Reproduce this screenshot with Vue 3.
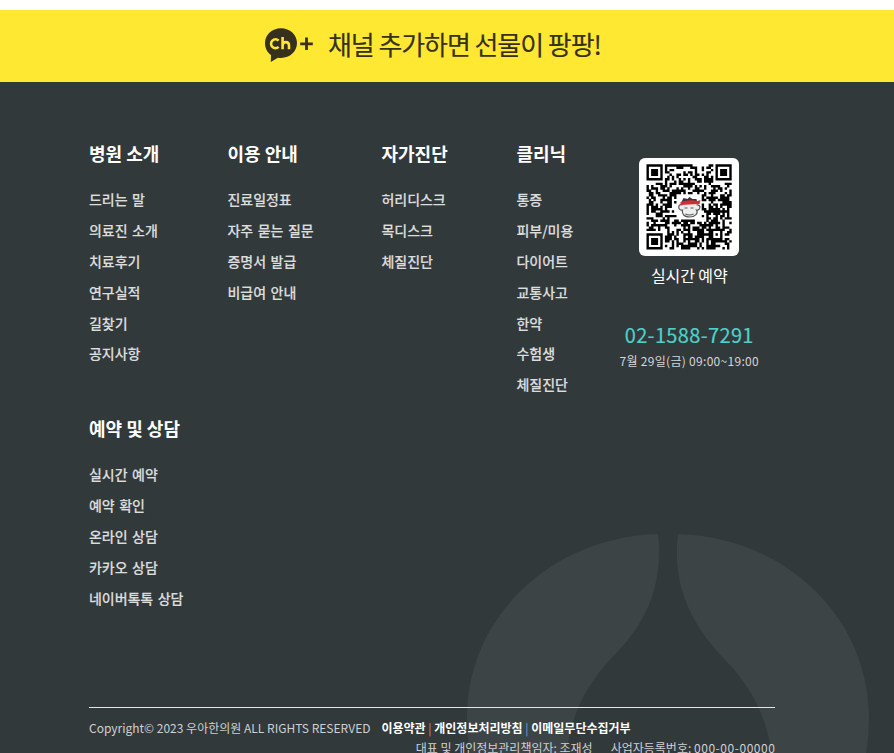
<script setup>
const menus = [
  { title: '병원 소개', items: ['드리는 말', '의료진 소개', '치료후기', '연구실적', '길찾기', '공지사항'] },
  { title: '이용 안내', items: ['진료일정표', '자주 묻는 질문', '증명서 발급', '비급여 안내'] },
  { title: '자가진단', items: ['허리디스크', '목디스크', '체질진단'] },
  { title: '클리닉', items: ['통증', '피부/미용', '다이어트', '교통사고', '한약', '수험생', '체질진단'] },
  { title: '예약 및 상담', items: ['실시간 예약', '예약 확인', '온라인 상담', '카카오 상담', '네이버톡톡 상담'] },
]

// QR symbol: 37 x 37 modules, three finders, one alignment mark and a clear centre for the logo
const size = 37
function ring(x, y, cx, cy) {
  return Math.max(Math.abs(x - cx), Math.abs(y - cy))
}
let seed = 20230729
function next() {
  seed = (seed * 1103515245 + 12345) % 2147483648
  return seed / 2147483648
}
let qrPath = ''
for (let y = 0; y < size; y++) {
  for (let x = 0; x < size; x++) {
    let dark = next() < 0.53
    for (const [cx, cy] of [[3, 3], [33, 3], [3, 33]]) {
      const r = ring(x, y, cx, cy)
      if (r <= 4) dark = r !== 4 && r !== 2
    }
    const a = ring(x, y, 30, 30)
    if (a <= 2) dark = a !== 1
    if (ring(x, y, 18, 18) <= 5) dark = false
    if (dark) qrPath += `M${x} ${y}h1.04v1.04h-1.04z`
  }
}
</script>

<template>
  <div class="page">
    <a class="banner">
      <svg class="channel" width="50" height="36" viewBox="0 0 50 36">
        <path d="M17 .3C8 .3 1 6.800 1 15.100c0 5.200 2.300 9.300 6 12L6.800 34l7-4.300c1 .2 2.200 .3 3.200 .3 9 0 16-6.500 16-14.900S26 .3 17 .3z" fill="#36301c" />
        <path d="M14.600 12.600a4.400 4.400 0 1 0 0 6.200M18.600 9v12.300M18.600 17.600c0-4.600 6.400-4.600 6.400 0v3.700" fill="none" stroke="#fee831" stroke-width="2.600" />
        <path d="M42.500 9.500v12.600M36.200 15.800h12.600" fill="none" stroke="#36301c" stroke-width="2.800" />
      </svg>
      <span class="banner-text">채널 추가하면 선물이 팡팡!</span>
    </a>

    <footer class="footer">
      <svg class="emblem" width="404" height="220" viewBox="0 0 404 220">
        <path d="M192 0C85 3 1 83 1 184q0 18 3 36H101C103 188 117 156 141 129C166 103 199 69 192 0z" fill="#3d4446" />
        <path d="M212 0C319 3 403 83 403 184q0 18-3 36H306C301 184 285 153 262 129C238 104 204 64 212 0z" fill="#3d4446" />
      </svg>
      <div class="inner">
        <div class="top">
          <nav class="menus">
            <section v-for="menu in menus" :key="menu.title" class="menu">
              <h2>{{ menu.title }}</h2>
              <ul>
                <li v-for="item in menu.items" :key="item">{{ item }}</li>
              </ul>
            </section>
          </nav>
          <aside class="contact">
            <svg class="qr" width="100" height="98" viewBox="0 0 100 98">
              <rect width="100" height="98" rx="6" fill="#fff" />
              <g transform="translate(7.500 6.300) scale(2.3)">
                <path :d="qrPath" fill="#000" />
              </g>
              <g transform="translate(38.500 38)">
                <path d="M4 6L6 2l4 1 2-2 3 2 4 0 1 5z" fill="#34383a" />
                <path d="M5 9C0 7 0 15 5 14c-1 3 1 7 7 7s9-4 7-7c4 1 5-6 0-5M7 12h3m3 0h3M8 18q4 2 8 0" fill="#eee" stroke="#55595a" stroke-width="1.2" />
                <path d="M3 6q9-3 17-1l3-1-1 4-19 1z" fill="#d52b36" />
              </g>
            </svg>
            <p class="reserve">실시간 예약</p>
            <p class="phone">02-1588-7291</p>
            <p class="hours">7월 29일(금) 09:00~19:00</p>
          </aside>
        </div>
        <div class="legal">
          <div class="legal-row">
            <span class="copyright">Copyright© 2023 우아한의원 ALL RIGHTS RESERVED</span>
            <span class="policies"><b>이용약관</b><i class="amber">|</i><b>개인정보처리방침</b><i class="blue">|</i><b>이메일무단수집거부</b></span>
          </div>
          <div class="company">
            <span>대표 및 개인정보관리책임자: 조재성</span>
            <span class="biz">사업자등록번호: <span class="digits">000-00-00000</span></span>
          </div>
        </div>
      </div>
    </footer>
  </div>
</template>

<style>
body {
  margin: 0;
  overflow: hidden;
}
</style>

<style scoped>
.page {
  height: 753px;
  padding-top: 10px;
  box-sizing: border-box;
  overflow: hidden;
  background: #fff;
  font-family: "Noto Sans CJK KR", "Noto Sans", sans-serif;
}
.banner {
  display: flex;
  align-items: center;
  height: 72px;
  padding-left: 264px;
  background: #fee831;
}
.channel {
  flex: none;
}
.banner-text {
  margin-left: 14px;
  color: #36301c;
  font-size: 26px;
  line-height: 36px;
  letter-spacing: -1.08px;
  white-space: nowrap;
  margin-top: -4px;
  -webkit-text-stroke: 0.15px #36301c;
}
.footer {
  position: relative;
  height: 671px;
  background: #32393b;
}
.emblem {
  position: absolute;
  left: 466px;
  top: 452px;
}
.inner {
  position: relative;
  width: 686px;
  margin-left: 89px;
  padding-top: 57px;
}
.top {
  display: flex;
  height: 568px;
}
.menus {
  display: grid;
  grid-template-columns: 138.500px 154px 135px 87px;
  grid-template-rows: 275px 230px;
  flex: none;
}
h2 {
  margin: 0 0 22.400px;
  color: #fff;
  font-size: 18px;
  line-height: 28px;
  font-weight: 700;
  white-space: nowrap;
}
ul {
  margin: 0;
  padding: 0;
  list-style: none;
}
li {
  height: 30.8px;
  color: #dcdddd;
  font-size: 14px;
  line-height: 20px;
  font-weight: 500;
  letter-spacing: -0.05px;
  word-spacing: 1.5px;
  white-space: nowrap;
  -webkit-text-stroke: 0.15px #dcdddd;
}
.contact {
  display: flex;
  flex-direction: column;
  align-items: center;
  width: 171px;
  margin-left: -0.5px;
  padding-top: 19px;
}
.qr {
  flex: none;
}
p {
  margin: 0;
  padding-left: 1.500px;
  white-space: nowrap;
}
.reserve {
  margin-top: 6px;
  color: #fff;
  font-size: 16px;
  line-height: 26px;
  letter-spacing: -0.1px;
}
.phone {
  margin-top: 30px;
  color: #4fd0c7;
  font-size: 20px;
  line-height: 34px;
  letter-spacing: 0.35px;
  -webkit-text-stroke: 0.2px #4fd0c7;
}
.hours {
  color: #d5d6d6;
  font-size: 12px;
  line-height: 18px;
  letter-spacing: 0.3px;
}
.legal {
  border-top: 1px solid #e4e5e5;
  padding-top: 11px;
  font-size: 12px;
  line-height: 18px;
  color: #cfd0d1;
  white-space: nowrap;
}
.legal-row {
  display: flex;
  gap: 11px;
}
.policies {
  color: #fff;
}
.policies i {
  font-style: normal;
  margin: 0 2.700px;
}
.amber {
  color: #c99b4c;
}
.blue {
  color: #6ba6d8;
}
.company {
  display: flex;
  justify-content: flex-end;
  gap: 18px;
  margin-top: 2px;
}
.digits {
  letter-spacing: 0.55px;
  margin-right: -0.5px;
}
</style>
